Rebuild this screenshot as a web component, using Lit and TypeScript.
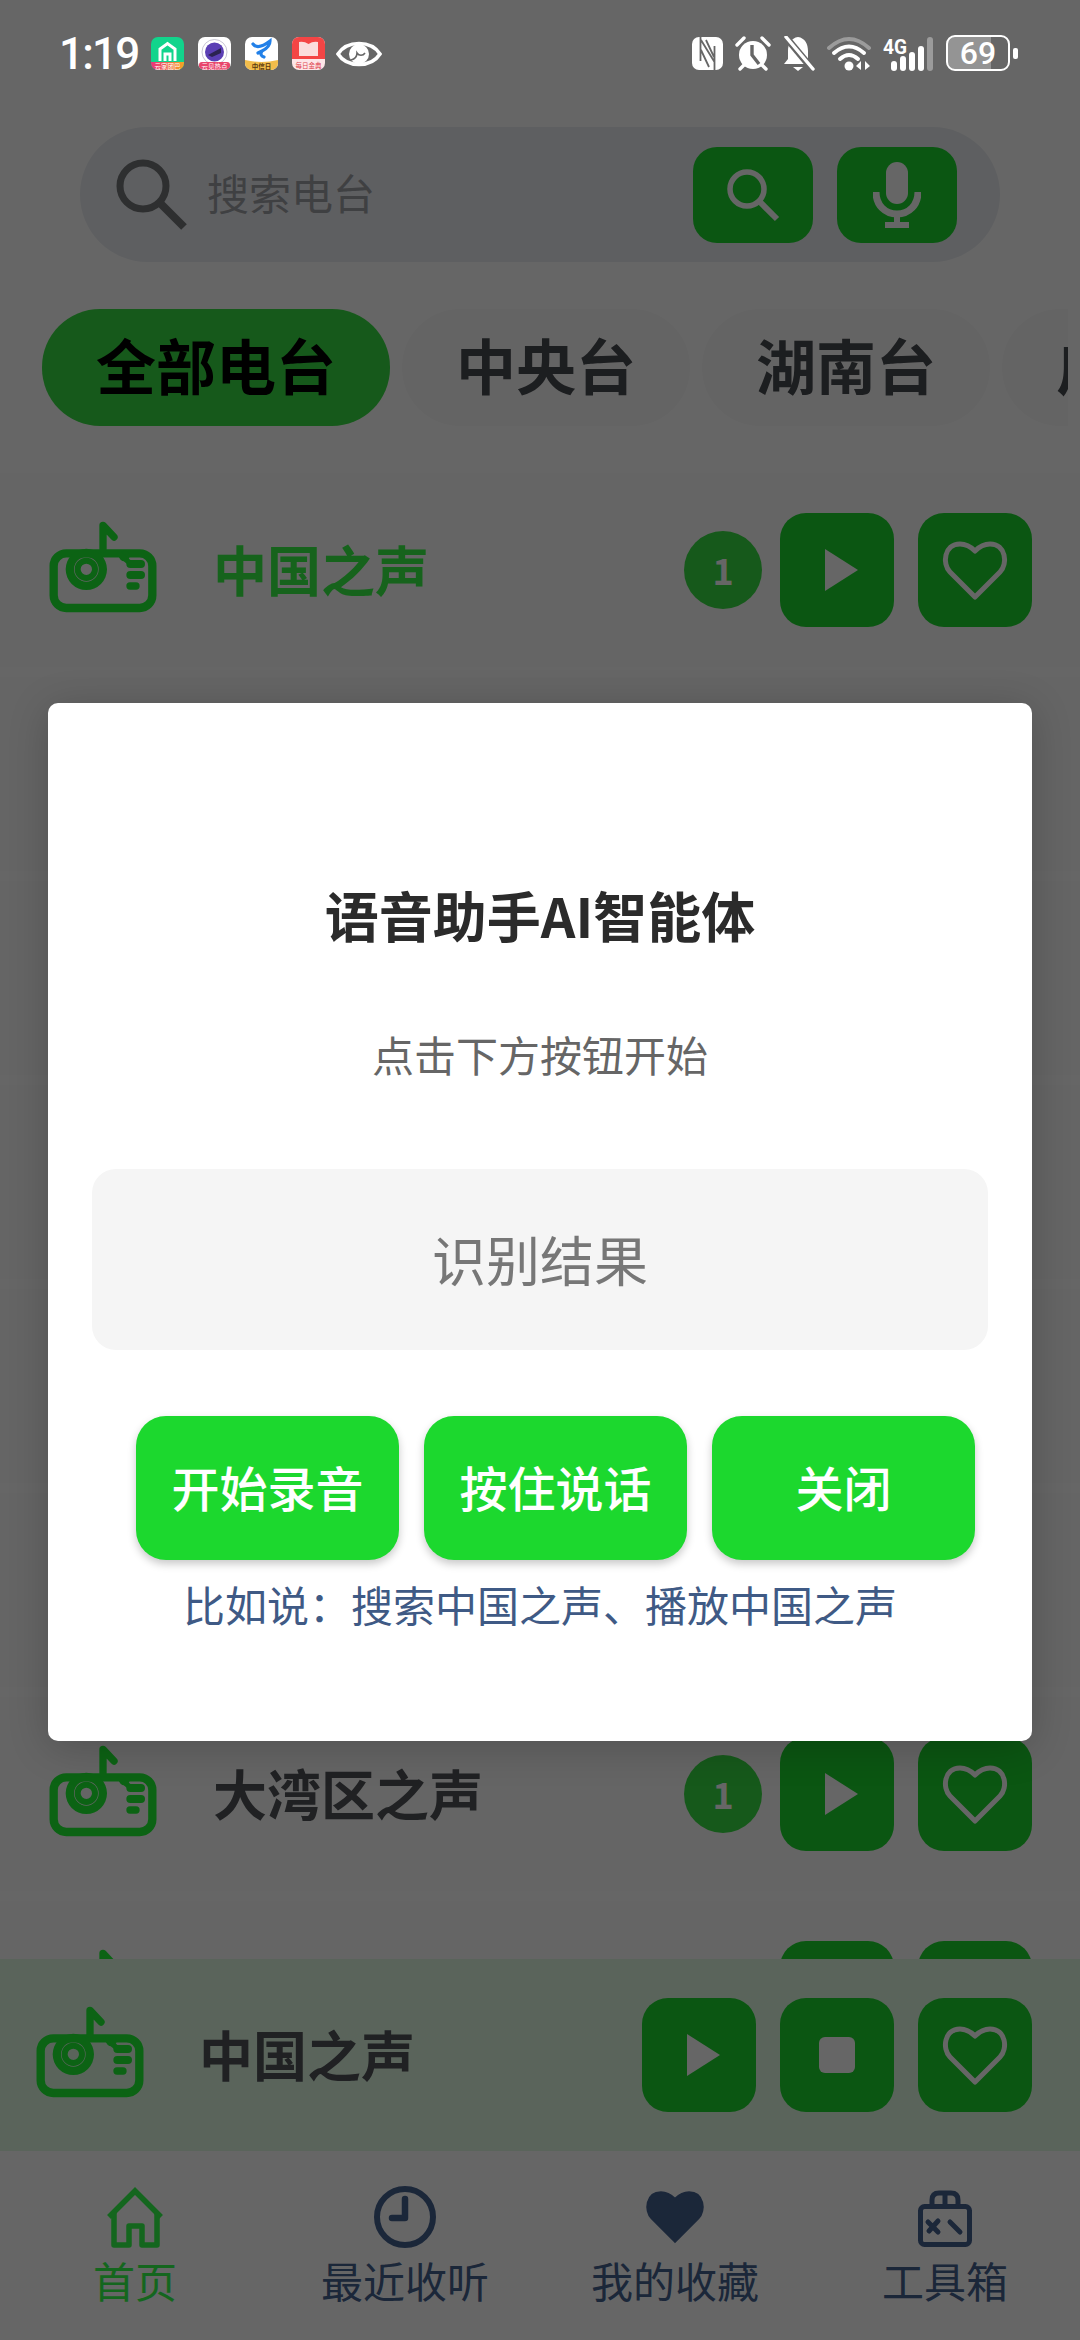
import { LitElement, html, css } from "lit";
import { customElement } from "lit/decorators.js";

// hidden rows sit behind the dialog, their names can't be read
const STATIONS = [
  { name: "中国之声", active: true, badge: true },
  { name: "", active: false, badge: true },
  { name: "", active: false, badge: true },
  { name: "", active: false, badge: true },
  { name: "", active: false, badge: true },
  { name: "", active: false, badge: true },
  { name: "大湾区之声", active: false, badge: true },
  { name: "", active: false, badge: false },
];

const HEART =
  "M33 57 L8 32 C0 24 2 4 18 4 C24 4 29 7 33 11 C37 7 42 4 48 4 C64 4 66 24 58 32 Z";

const radioIcon = () => html`
  <svg class="radio" viewBox="55 62 330 282" fill="none">
    <rect x="72" y="162" width="296" height="164" rx="38" stroke="currentColor" stroke-width="25" />
    <path
      fill="currentColor"
      fill-rule="evenodd"
      d="M108 210a62 62 0 1 0 124 0a62 62 0 1 0 -124 0z M133 210a37 37 0 1 0 74 0a37 37 0 1 0 -74 0z M135 210a35 35 0 1 0 70 0a35 35 0 1 0 -70 0z M153 210a17 17 0 1 0 34 0a17 17 0 1 0 -34 0z"
    />
    <path d="M220 150 V78 L253 113" stroke="currentColor" stroke-width="22" stroke-linecap="round" stroke-linejoin="round" />
    <path
      fill="currentColor"
      fill-rule="evenodd"
      d="M268 170a16 16 0 1 0 32 0a16 16 0 1 0 -32 0z M279 170a5 5 0 1 0 10 0a5 5 0 1 0 -10 0z"
    />
    <path d="M270 165 L305 195" stroke="currentColor" stroke-width="16" stroke-linecap="round" />
    <rect x="290" y="182" width="56" height="24" rx="12" fill="currentColor" />
    <rect x="290" y="215" width="56" height="24" rx="12" fill="currentColor" />
    <rect x="290" y="249" width="40" height="22" rx="11" fill="currentColor" />
  </svg>
`;

const playIcon = () => html`
  <svg class="play" width="33" height="42" viewBox="0 0 33 42"><path d="M0 0 L33 21 L0 42 Z" fill="#fff" /></svg>
`;

const stopIcon = () => html`<span class="stop"></span>`;

const heartIcon = () => html`
  <svg width="66" height="61" viewBox="0 0 66 61" fill="none">
    <path d=${HEART} stroke="#fff" stroke-width="5" stroke-linejoin="round" />
  </svg>
`;

@customElement("app-root")
export class AppRoot extends LitElement {
  static styles = css`
    :host {
      display: block;
      position: relative;
      width: 1080px;
      height: 2340px;
      overflow: hidden;
      background: #fff;
      font-family: "Noto Sans CJK SC", "Noto Sans", sans-serif;
    }
    svg {
      display: block;
      flex: none;
    }
    .page {
      display: flex;
      flex-direction: column;
      height: 2340px;
    }

    /* status bar stays bright above the dim layer */
    .status {
      position: relative;
      z-index: 2;
      flex: none;
      height: 127px;
      box-sizing: border-box;
      padding: 35px 62px 0 59px;
      display: flex;
      align-items: flex-start;
      color: #fff;
    }
    .time {
      font-family: Roboto, sans-serif;
      font-size: 44px;
      font-weight: 500;
      line-height: 38px;
      letter-spacing: -1.8px;
      width: 92px;
    }
    .apps {
      display: flex;
      align-items: center;
      gap: 14px;
      margin-top: 2px;
    }
    .eye {
      margin-left: -3px;
    }
    .sys {
      margin-left: auto;
      display: flex;
      align-items: center;
      gap: 12px;
      height: 36px;
    }
    .battery {
      box-sizing: border-box;
      width: 64px;
      height: 36px;
      border: 2.5px solid #fff;
      border-radius: 9px;
      background: linear-gradient(90deg, rgba(255, 255, 255, 0.3) 72%, transparent 72%);
      display: flex;
      align-items: center;
      justify-content: center;
      font-family: Roboto, sans-serif;
      font-size: 32px;
      font-weight: 500;
      line-height: 1;
    }
    .nub {
      width: 5px;
      height: 11px;
      background: #fff;
      border-radius: 2px;
      margin-left: -9px;
    }

    .search {
      flex: none;
      box-sizing: border-box;
      height: 135px;
      margin: 0 80px;
      padding: 0 43px 0 35px;
      border-radius: 68px;
      background: #ebeef2;
      display: flex;
      align-items: center;
    }
    .placeholder {
      flex: 1;
      margin: -6px 0 0 18px;
      font-size: 42px;
      line-height: 60px;
      color: #9ea0a5;
    }
    .search-btn {
      width: 120px;
      height: 96px;
      border-radius: 24px;
      background: #1cd82e;
      display: flex;
      align-items: center;
      justify-content: center;
    }
    .search-btn + .search-btn {
      margin-left: 24px;
    }

    .chips {
      flex: none;
      margin: 47px 12px 0 0;
      padding-left: 42px;
      height: 117px;
      display: flex;
      gap: 12px;
      overflow: hidden;
    }
    .chip {
      flex: none;
      height: 117px;
      box-sizing: border-box;
      padding: 0 54px;
      border-radius: 58px;
      background: #fbfbfb;
      font-size: 60px;
      font-weight: 700;
      line-height: 110px;
      color: #484b50;
    }
    .chip.on {
      background: #39de44;
      color: #000;
    }

    .list {
      flex: 1;
      min-height: 0;
      margin-top: 42px;
      padding-top: 5px;
      display: flex;
      flex-direction: column;
      gap: 10px;
      overflow: hidden;
    }
    .row {
      flex: none;
      box-sizing: border-box;
      height: 194px;
      padding: 0 48px 0 48px;
      background: #fcfcfc;
      display: flex;
      align-items: center;
    }
    .radio {
      width: 110px;
      height: 94px;
      color: #1ef834;
      margin-top: -6px;
    }
    .row .radio {
      margin-right: 55px;
    }
    .name {
      flex: 1;
      margin-top: -3px;
      font-size: 54px;
      font-weight: 700;
      line-height: 70px;
      color: #505358;
    }
    .row.on .name {
      color: #37f846;
    }
    .badge {
      width: 78px;
      height: 78px;
      margin-right: 18px;
      border-radius: 50%;
      background: #39de44;
      color: #fff;
      font-size: 36px;
      font-weight: 700;
      line-height: 76px;
      text-align: center;
    }
    .btn {
      width: 114px;
      height: 114px;
      border-radius: 26px;
      background: #1cd82e;
      display: flex;
      align-items: center;
      justify-content: center;
    }
    .btn + .btn {
      margin-left: 24px;
    }
    .play {
      margin-left: 8px;
    }
    .stop {
      width: 36px;
      height: 36px;
      border-radius: 6px;
      background: #fff;
    }

    .player {
      flex: none;
      box-sizing: border-box;
      height: 192px;
      padding: 0 48px 0 35px;
      background: #e1fae4;
      display: flex;
      align-items: center;
    }
    .player .radio {
      margin-right: 54px;
    }

    .nav {
      flex: none;
      height: 189px;
      display: flex;
    }
    .tab {
      flex: 1;
      padding-top: 35px;
      display: flex;
      flex-direction: column;
      align-items: center;
      color: #446190;
      font-size: 42px;
      line-height: 50px;
    }
    .tab.on {
      color: #34ff4b;
    }
    .tab svg {
      margin-bottom: 7px;
    }

    .overlay {
      position: absolute;
      inset: 0;
      z-index: 1;
      box-sizing: border-box;
      padding: 703px 48px 0;
      background: rgba(0, 0, 0, 0.6);
    }
    .modal {
      box-sizing: border-box;
      height: 1038px;
      padding-top: 174px;
      border-radius: 10px;
      background: #fff;
      box-shadow: 0 6px 40px rgba(0, 0, 0, 0.2);
      display: flex;
      flex-direction: column;
      align-items: center;
    }
    .title {
      font-size: 54px;
      font-weight: 700;
      line-height: 76px;
      color: #2b2b2b;
    }
    .sub {
      margin-top: 71px;
      font-size: 42px;
      line-height: 59px;
      color: #666;
    }
    .result {
      box-sizing: border-box;
      width: 896px;
      height: 181px;
      margin-top: 86px;
      border-radius: 24px;
      background: #f5f5f5;
      font-size: 54px;
      line-height: 179px;
      text-align: center;
      color: #777;
    }
    .actions {
      align-self: stretch;
      margin: 66px 57px 0 88px;
      display: flex;
      gap: 25px;
    }
    .action {
      flex: 1;
      height: 144px;
      border-radius: 30px;
      background: #1cd82e;
      box-shadow: 0 4px 8px rgba(0, 0, 0, 0.22);
      font-size: 48px;
      font-weight: 500;
      line-height: 140px;
      text-align: center;
      color: #fff;
    }
    .hint {
      margin-top: 14px;
      font-size: 42px;
      line-height: 59px;
      color: #3f5a85;
    }
  `;

  renderApps() {
    return html`
      <div class="apps">
        <svg width="33" height="33" viewBox="0 0 33 33">
          <defs>
            <linearGradient id="a1" x1="0" x2="1"><stop offset="0" stop-color="#e8327c" /><stop offset="1" stop-color="#f5a623" /></linearGradient>
            <clipPath id="c1"><rect width="33" height="33" rx="7" /></clipPath>
          </defs>
          <g clip-path="url(#c1)">
            <rect width="33" height="33" fill="#12d48c" />
            <path d="M9 24 V12 L16.500 6.500 L24 12 V24 M14 24 V17 H19 V24" fill="none" stroke="#fff" stroke-width="3" />
            <rect y="25" width="33" height="8" fill="url(#a1)" />
            <text x="16.500" y="31.500" font-size="6.500" fill="#fff" text-anchor="middle">云家团巴</text>
          </g>
        </svg>
        <svg width="33" height="33" viewBox="0 0 33 33">
          <defs><clipPath id="c2"><rect width="33" height="33" rx="7" /></clipPath></defs>
          <g clip-path="url(#c2)">
            <rect width="33" height="33" fill="#fff" />
            <circle cx="16.500" cy="15" r="12.500" fill="none" stroke="#b9b6c8" stroke-width="0.800" />
            <circle cx="16.500" cy="15" r="9.500" fill="#5b3fb4" />
            <path d="M10 18 L23 11 L23 16 L14 20 Z" fill="#2b2350" />
            <rect x="1" y="25" width="31" height="8" rx="3" fill="#e8456b" />
            <text x="16.500" y="31.500" font-size="6.500" fill="#fff" text-anchor="middle">云见热点</text>
          </g>
        </svg>
        <svg width="33" height="33" viewBox="0 0 33 33">
          <defs><clipPath id="c3"><rect width="33" height="33" rx="7" /></clipPath></defs>
          <g clip-path="url(#c3)">
            <rect width="33" height="33" fill="#fff" />
            <path d="M8 7 C11 11 17 10 25 4 C25 9 21 12 17 14 C15 17 16 19 19 20 M17 14 L13 16" fill="none" stroke="#2280e8" stroke-width="3.200" stroke-linecap="round" />
            <path d="M0 23 Q16.500 27 33 23 V33 H0 Z" fill="#f2bd4b" />
            <text x="16.500" y="31.800" font-size="6.500" font-weight="700" fill="#5b3a10" text-anchor="middle">中信日</text>
          </g>
        </svg>
        <svg width="33" height="33" viewBox="0 0 33 33">
          <defs><clipPath id="c4"><rect width="33" height="33" rx="7" /></clipPath></defs>
          <g clip-path="url(#c4)">
            <rect width="33" height="33" fill="#fde6e8" />
            <rect width="33" height="22" fill="#f44545" />
            <path d="M7 5 Q12 4 16.500 7 Q21 4 26 5 V19 H7 Z" fill="#fbdcdc" />
            <text x="16.500" y="30.500" font-size="6.500" fill="#e0454f" text-anchor="middle">每日金典</text>
          </g>
        </svg>
        <svg class="eye" width="46" height="32" viewBox="0 0 46 32">
          <path d="M2 16 C11 2 35 2 44 16 C35 30 11 30 2 16 Z" fill="none" stroke="#fff" stroke-width="3.600" />
          <circle cx="23" cy="16" r="10" fill="#fff" />
          <path d="M15 22 C19 21 21 19 21 15 C23 18 27 18 29 15" fill="none" stroke="#666" stroke-width="1.600" />
        </svg>
      </div>
    `;
  }

  renderSys() {
    return html`
      <div class="sys">
        <svg width="31" height="33" viewBox="0 0 31 33">
          <rect width="31" height="33" rx="7" fill="#fff" />
          <path d="M8.500 0 V24 M22.500 33 V9 M9 3 L22.500 25 M9 13 L17 30 M14 3 L22 20" fill="none" stroke="#666" stroke-width="1.800" />
        </svg>
        <svg width="36" height="35" viewBox="0 0 36 35">
          <circle cx="18" cy="19" r="14" fill="#fff" />
          <path d="M17 9 V19 L24 28" fill="none" stroke="#666" stroke-width="3.400" />
          <path d="M2 9 L9 2 M34 9 L27 2 M5 33 L9 29 M31 33 L27 29" fill="none" stroke="#fff" stroke-width="3.400" stroke-linecap="round" />
        </svg>
        <svg width="32" height="35" viewBox="0 0 32 35">
          <path d="M15 1 C8 2 5 8 5 15 V23 L1 28 H27 L25 23 V15 C25 8 22 2 15 1 Z" fill="#fff" />
          <path d="M10 31 H20 L15 35 Z" fill="#fff" />
          <path d="M1 -1 L31 35" stroke="#666" stroke-width="7" />
          <path d="M3 1 L30 33" stroke="#fff" stroke-width="3.400" stroke-linecap="round" />
        </svg>
        <svg width="44" height="35" viewBox="0 0 44 35" fill="none">
          <path d="M2 12 Q22 -6 42 12" stroke="#fff" stroke-opacity="0.35" stroke-width="4" stroke-linecap="round" />
          <path d="M7 17 Q22 4 37 17" stroke="#fff" stroke-width="4" stroke-linecap="round" />
          <path d="M13 23 Q22 15 31 23" stroke="#fff" stroke-width="4" stroke-linecap="round" />
          <circle cx="22" cy="30" r="4.500" fill="#fff" />
          <path d="M34 25 V34 L29 30 Z M38 25 V34 L43 30 Z" fill="#fff" />
        </svg>
        <svg width="51" height="35" viewBox="0 0 51 35">
          <text x="0" y="18" font-family="Roboto, sans-serif" font-size="20" font-weight="700" textLength="24" lengthAdjust="spacingAndGlyphs" fill="#fff">4G</text>
          <rect x="8" y="25" width="6" height="10" rx="3" fill="#fff" />
          <rect x="17" y="20" width="6" height="15" rx="3" fill="#fff" />
          <rect x="26" y="16" width="6" height="19" rx="3" fill="#fff" />
          <rect x="35" y="10" width="6" height="25" rx="3" fill="#fff" />
          <rect x="44" y="1" width="6" height="34" rx="3" fill="#fff" fill-opacity="0.35" />
        </svg>
        <div class="battery">69</div>
        <div class="nub"></div>
      </div>
    `;
  }

  renderRow(s: { name: string; active: boolean; badge: boolean }) {
    return html`
      <div class="row ${s.active ? "on" : ""}">
        ${radioIcon()}
        <div class="name">${s.name}</div>
        ${s.badge ? html`<div class="badge">1</div>` : ""}
        <div class="btn">${playIcon()}</div>
        <div class="btn">${heartIcon()}</div>
      </div>
    `;
  }

  render() {
    return html`
      <div class="page">
        <div class="status">
          <div class="time">1:19</div>
          ${this.renderApps()} ${this.renderSys()}
        </div>

        <div class="search">
          <svg width="74" height="74" viewBox="0 0 74 74" fill="none">
            <circle cx="28" cy="28" r="23" stroke="#737578" stroke-width="7" />
            <path d="M44 44 L69 69" stroke="#737578" stroke-width="8" />
          </svg>
          <div class="placeholder">搜索电台</div>
          <div class="search-btn">
            <svg width="56" height="56" viewBox="0 0 56 56" fill="none">
              <circle cx="22" cy="22" r="17" stroke="#fff" stroke-width="5.500" />
              <path d="M34 34 L52 52" stroke="#fff" stroke-width="6" />
            </svg>
          </div>
          <div class="search-btn">
            <svg width="48" height="66" viewBox="0 0 48 66" fill="none">
              <rect x="13" y="0" width="22" height="42" rx="11" fill="#fff" />
              <path d="M3 30 C3 43 12 52 24 52 C36 52 45 43 45 30" stroke="#fff" stroke-width="7" />
              <path d="M24 52 V62 M12 63 H36" stroke="#fff" stroke-width="6" />
            </svg>
          </div>
        </div>

        <div class="chips">
          <div class="chip on">全部电台</div>
          <div class="chip">中央台</div>
          <div class="chip">湖南台</div>
          <div class="chip">广东台</div>
        </div>

        <div class="list">${STATIONS.map((s) => this.renderRow(s))}</div>

        <div class="player">
          ${radioIcon()}
          <div class="name">中国之声</div>
          <div class="btn">${playIcon()}</div>
          <div class="btn">${stopIcon()}</div>
          <div class="btn">${heartIcon()}</div>
        </div>

        <div class="nav">
          <div class="tab on">
            <svg width="62" height="62" viewBox="0 0 62 62" fill="none">
              <path d="M5 31 L31 5 L57 31" stroke="currentColor" stroke-width="5.500" />
              <path d="M10 26 V59 H25 V40 H38 V59 H53 V26" stroke="currentColor" stroke-width="5.500" stroke-linejoin="round" />
            </svg>
            首页
          </div>
          <div class="tab">
            <svg width="62" height="62" viewBox="0 0 62 62" fill="none">
              <circle cx="31" cy="31" r="28" stroke="currentColor" stroke-width="6" />
              <path d="M31 13 V32 H18" stroke="currentColor" stroke-width="6.500" stroke-linecap="round" stroke-linejoin="round" />
            </svg>
            最近收听
          </div>
          <div class="tab">
            <svg width="62" height="62" viewBox="0 0 66 61" fill="currentColor">
              <path d=${HEART} stroke="currentColor" stroke-width="2" />
            </svg>
            我的收藏
          </div>
          <div class="tab">
            <svg width="62" height="62" viewBox="0 0 62 62" fill="none">
              <rect x="6.500" y="20.500" width="49" height="38" rx="4" stroke="currentColor" stroke-width="5" />
              <path d="M18 20 V14 C18 9 21 7 25 7 H37 C41 7 44 9 44 14 V20 M31 7 V20" stroke="currentColor" stroke-width="5" />
              <path d="M14 36 L24 46 M24 35 L15 45 M36 36 L46 46" stroke="currentColor" stroke-width="5" stroke-linecap="round" />
            </svg>
            工具箱
          </div>
        </div>
      </div>

      <div class="overlay">
        <div class="modal">
          <div class="title">语音助手AI智能体</div>
          <div class="sub">点击下方按钮开始</div>
          <div class="result">识别结果</div>
          <div class="actions">
            <div class="action">开始录音</div>
            <div class="action">按住说话</div>
            <div class="action">关闭</div>
          </div>
          <div class="hint">比如说：搜索中国之声、播放中国之声</div>
        </div>
      </div>
    `;
  }
}
